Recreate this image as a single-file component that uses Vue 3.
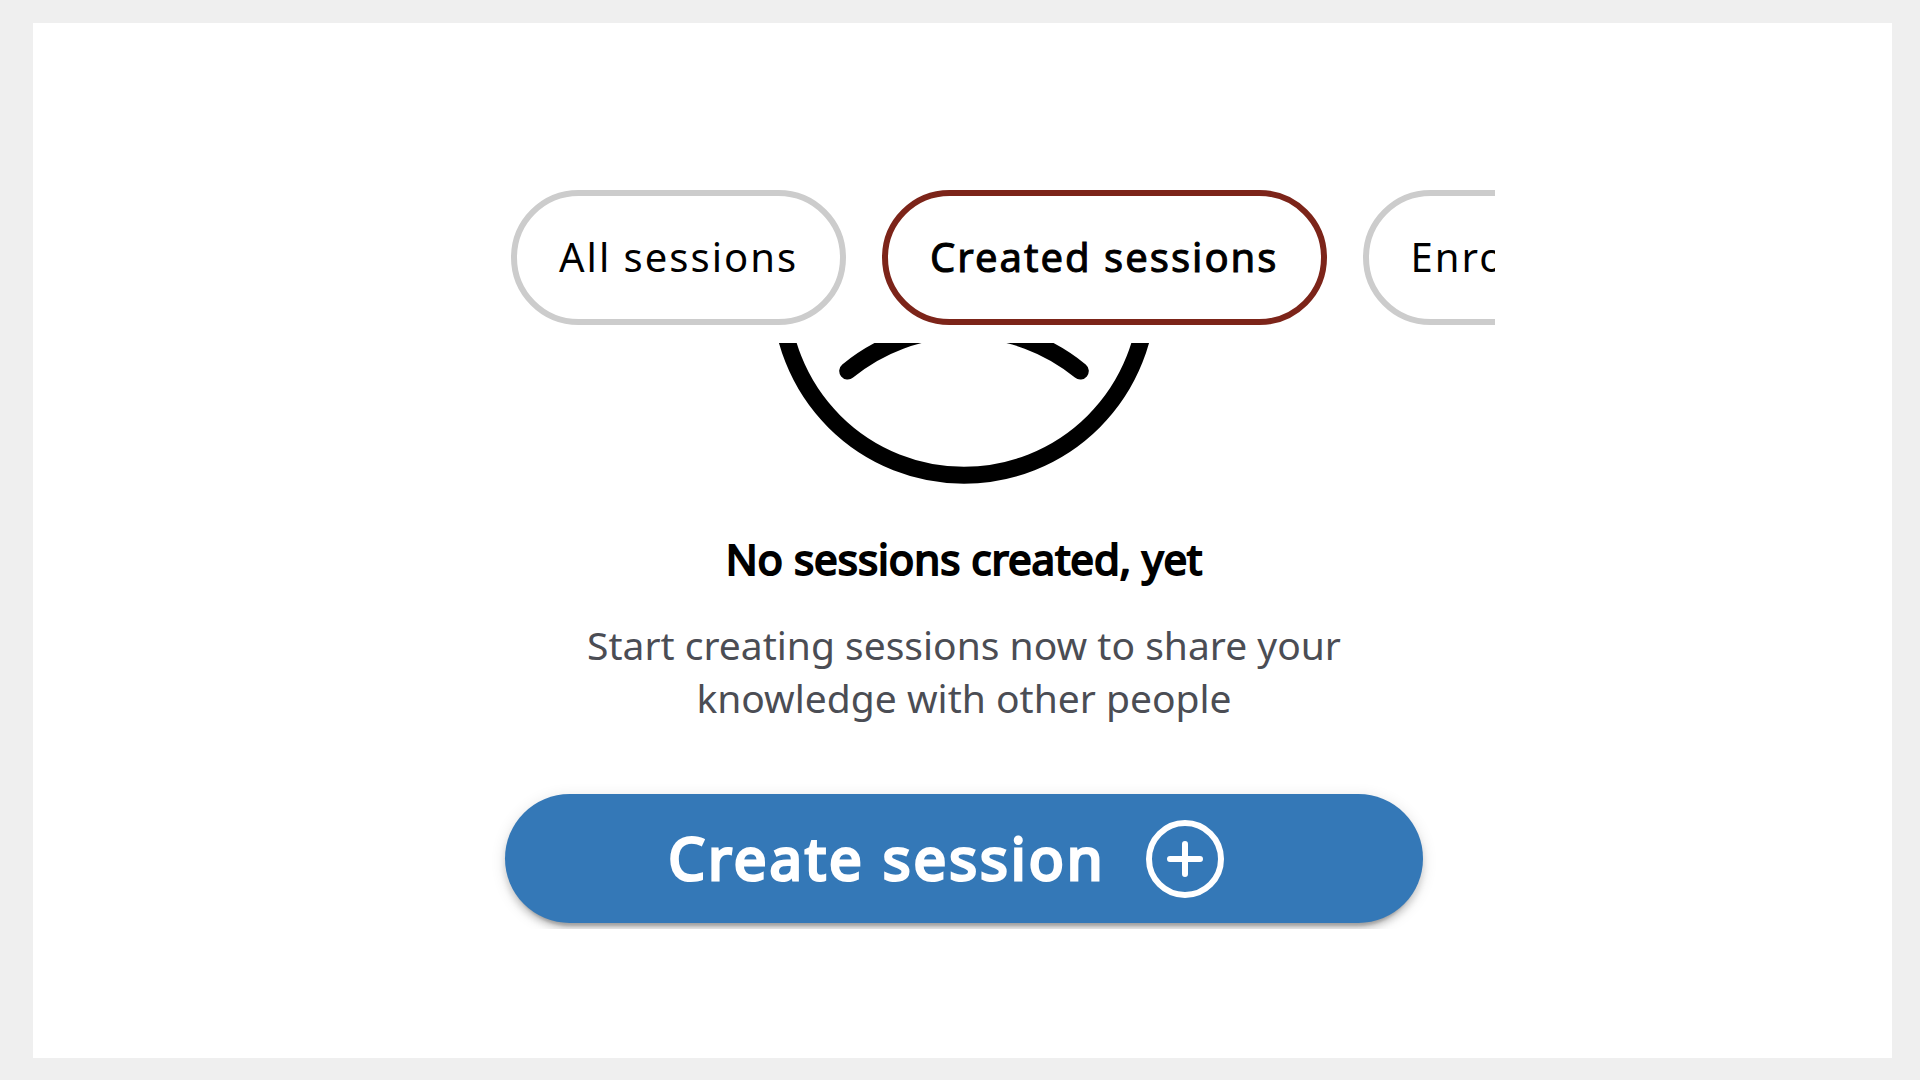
<script setup>
import { ref } from 'vue'

const filters = ['All sessions', 'Created sessions', 'Enrolled sessions']
const active = ref('Created sessions')
</script>

<template>
  <div class="page">
    <main class="card">
      <div class="column">
        <nav class="filters" aria-label="Session filter">
          <button
            v-for="name in filters"
            :key="name"
            type="button"
            class="chip"
            :class="{ active: name === active }"
            :aria-pressed="name === active"
            @click="active = name"
          >{{ name }}</button>
        </nav>

        <section class="empty">
          <svg class="face" viewBox="0 0 386 141" aria-hidden="true">
            <g fill="none" stroke="#000" stroke-width="17">
              <circle cx="193" cy="-51.3" r="183.5" />
              <path d="M76.7 28A183 183 0 0 1 309.3 28" stroke-linecap="round" />
            </g>
          </svg>
          <h1>No sessions created, yet</h1>
          <p>Start creating sessions now to share your knowledge with other people</p>
        </section>

        <div class="actions">
          <button type="button" class="create">
            <span>Create session</span>
            <svg class="plus" viewBox="0 0 78 78" aria-hidden="true">
              <g fill="none" stroke="#fff" stroke-width="6" stroke-linecap="round">
                <circle cx="39" cy="39" r="36" />
                <path d="M39 24v30M24 39h30" />
              </g>
            </svg>
          </button>
        </div>
      </div>
    </main>
  </div>
</template>

<style>
body {
  margin: 0;
  background: #efefef;
}
</style>

<style scoped>
.page {
  box-sizing: border-box;
  display: flex;
  min-height: 100vh;
  padding: 23px 28px 22px 33px;
  background: #efefef;
  font-family: "Noto Sans", sans-serif;
}

.card {
  box-sizing: border-box;
  flex: 1;
  min-width: 0;
  padding: 167px 72px 80px 75px;
  overflow: hidden;
  background: #fff;
}

.column {
  max-width: 918px;
  margin: 0 auto;
}

.filters {
  display: flex;
  gap: 36px;
  margin-right: -72px;
  padding-left: 6px;
  overflow: hidden;
}

.chip {
  box-sizing: border-box;
  flex: none;
  height: 135px;
  padding: 0 42px 2px;
  border: 6px solid #ccc;
  border-radius: 68px;
  background: #fff;
  color: #000;
  font: 400 40px/52px "Noto Sans", sans-serif;
  letter-spacing: 2px;
  white-space: nowrap;
  cursor: pointer;
}

.chip.active {
  border-color: #7c2419;
  -webkit-text-stroke: 1px currentColor;
}

.empty {
  display: flex;
  flex-direction: column;
  align-items: center;
  padding-top: 18px;
  text-align: center;
}

.face {
  display: block;
  width: 386px;
  height: 141px;
}

h1 {
  margin: 47px 0 0;
  color: #000;
  font-size: 42px;
  font-weight: 400;
  line-height: 56px;
  -webkit-text-stroke: 2px currentColor;
}

p {
  max-width: 800px;
  margin: 31px 0 0;
  color: #4b4d54;
  font-size: 39px;
  line-height: 53px;
}

.actions {
  margin: 46px -24px 0;
  padding: 24px 24px 6px;
  overflow: hidden;
}

.create {
  display: flex;
  align-items: center;
  justify-content: center;
  gap: 40px;
  width: 100%;
  height: 129px;
  padding: 0 60px 0 24px;
  border: 0;
  border-radius: 65px;
  background: #3478b7;
  box-shadow: 0 9px 3px -6px rgba(0, 0, 0, 0.2), 0 6px 6px rgba(0, 0, 0, 0.14), 0 3px 15px rgba(0, 0, 0, 0.12);
  color: #fff;
  font: 400 58px/80px "Noto Sans", sans-serif;
  letter-spacing: 3px;
  -webkit-text-stroke: 3px currentColor;
  cursor: pointer;
}

.create span {
  padding-bottom: 2px;
}

.plus {
  flex: none;
  width: 78px;
  height: 78px;
}
</style>
